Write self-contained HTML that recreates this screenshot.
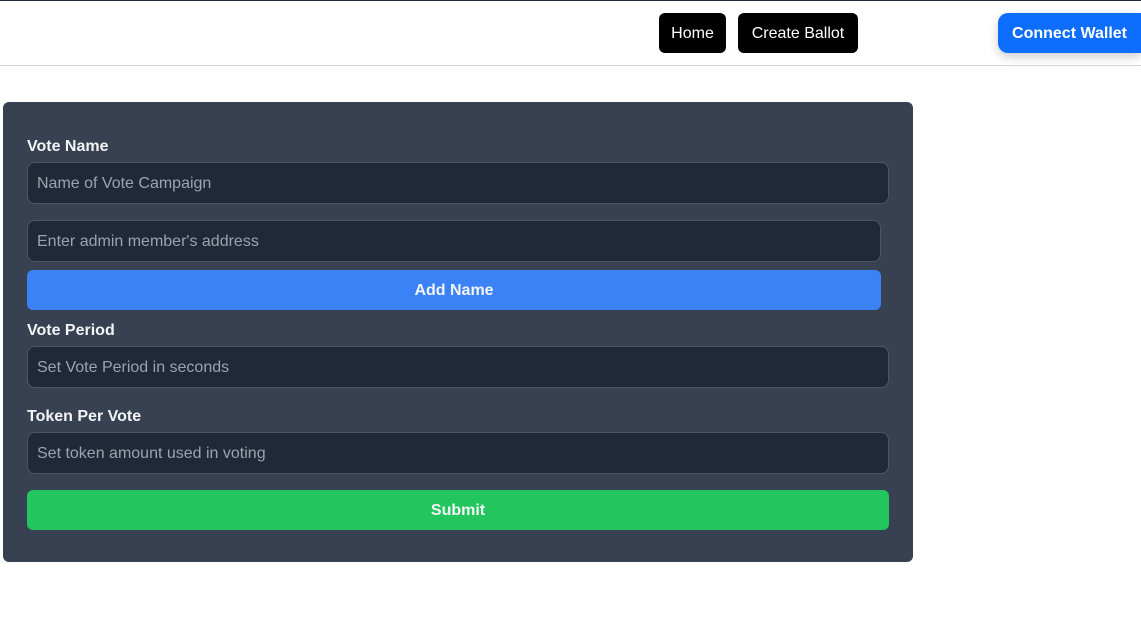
<!DOCTYPE html>
<html><head><style>
*{box-sizing:border-box;margin:0;padding:0}
body{width:1141px;height:638px;background:#fff;font-family:"Liberation Sans","DejaVu Sans",sans-serif;position:relative;overflow:hidden}
.a{position:absolute}
.nb{background:#000;color:#fff;border-radius:6px;font-size:16px;display:flex;align-items:center;justify-content:center;padding-top:2px}
.card{left:3px;top:102px;width:910px;height:460px;background:#374151;border-radius:6px}
.lbl{color:#f3f4f6;font-weight:bold;font-size:16px;left:27px}
.inp{left:27px;width:862px;height:42px;background:#1f2937;border:1px solid #4b5563;border-radius:8px;color:#9ca3af;font-size:16px;padding-left:9px;padding-top:2px;display:flex;align-items:center}
.btn{left:27px;height:40px;border-radius:6px;color:#f3f4f6;font-weight:bold;font-size:16px;display:flex;align-items:center;justify-content:center;padding-top:2px}
</style></head><body>
<div class="a" style="left:0;top:0;width:1141px;height:1px;background:#1f2937"></div>
<div class="a nb" style="left:659px;top:13px;width:67px;height:40px">Home</div>
<div class="a nb" style="left:738px;top:13px;width:120px;height:40px">Create Ballot</div>
<div class="a" style="left:998px;top:13px;width:143px;height:40px;background:#0d6efd;color:#fff;border-radius:10px 0 0 10px;font-weight:bold;font-size:16px;display:flex;align-items:center;justify-content:center;padding-top:1px;box-shadow:0 4px 10px rgba(0,0,0,.2)">Connect Wallet</div>
<div class="a" style="left:0;top:65px;width:1141px;height:1px;background:#d1d5db"></div>
<div class="a card"></div>
<div class="a lbl" style="top:138px">Vote Name</div>
<div class="a inp" style="top:162px">Name of Vote Campaign</div>
<div class="a inp" style="top:220px;width:854px">Enter admin member's address</div>
<div class="a btn" style="top:270px;width:854px;background:#3b82f6">Add Name</div>
<div class="a lbl" style="top:322px">Vote Period</div>
<div class="a inp" style="top:346px">Set Vote Period in seconds</div>
<div class="a lbl" style="top:408px">Token Per Vote</div>
<div class="a inp" style="top:432px">Set token amount used in voting</div>
<div class="a btn" style="top:490px;width:862px;background:#22c55e">Submit</div>
</body></html>
